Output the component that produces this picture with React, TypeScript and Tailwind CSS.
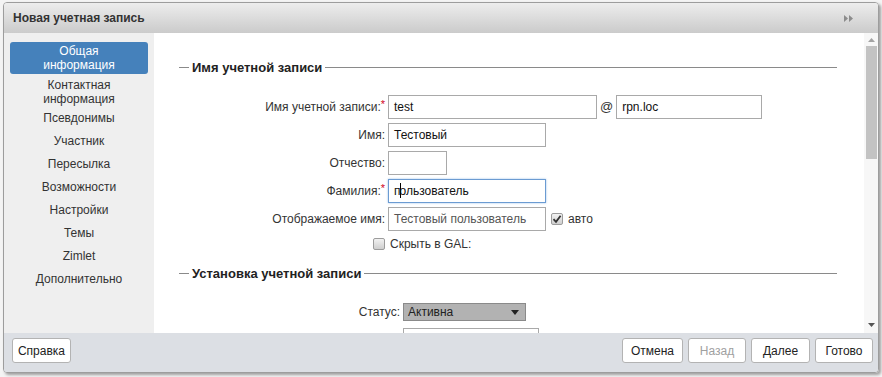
import React from "react";

const font = { fontFamily: '"Liberation Sans", Arial, sans-serif' };

const navItems = [
  "Псевдонимы",
  "Участник",
  "Пересылка",
  "Возможности",
  "Настройки",
  "Темы",
  "Zimlet",
  "Дополнительно",
];

function Legend({ title }: { title: string }) {
  return (
    <div className="flex items-center pl-[25px] pr-[27px]">
      <div className="h-px w-[10px] bg-[#8a8a8a]" />
      <span className="px-[3px] text-[13px] font-bold text-[#222]">{title}</span>
      <div className="h-px flex-1 bg-[#8a8a8a]" />
    </div>
  );
}

function Label({ text, req }: { text: string; req?: boolean }) {
  return (
    <div className="w-[234px] shrink-0 pr-[3px] text-right text-[12px] text-[#333]">
      {text}
      {req && <span className="relative -top-[3px] text-[11px] text-[#d0021b]">*</span>}
    </div>
  );
}

function Field({ w, children, focus, muted }: { w: string; children?: React.ReactNode; focus?: boolean; muted?: boolean }) {
  return (
    <div
      className={`${w} flex h-[24px] items-center border pl-[5px] text-[12px] ${
        focus ? "border-[#6b9bd2] shadow-[0_0_2px_#9cc0e8]" : "border-[#a9a9a9]"
      } ${muted ? "text-[#555]" : "text-[#111]"}`}
    >
      {children}
    </div>
  );
}

function Box({ checked }: { checked?: boolean }) {
  return (
    <div className="flex h-[12px] w-[12px] items-center justify-center rounded-[2px] border border-[#9c9c9c] bg-gradient-to-b from-[#f2f2f2] to-[#cfcfcf]">
      {checked && (
        <svg width="10" height="10" viewBox="0 0 10 10">
          <path d="M1.5 5.2 L4 7.8 L8.6 1.8" fill="none" stroke="#333" strokeWidth="1.8" />
        </svg>
      )}
    </div>
  );
}

function Btn({ text, w, disabled }: { text: string; w: string; disabled?: boolean }) {
  return (
    <div
      className={`${w} flex h-[25px] items-center justify-center rounded-[3px] border border-[#b3b3b3] bg-white text-[12px] ${
        disabled ? "text-[#a0a0a0]" : "text-[#222]"
      }`}
    >
      {text}
    </div>
  );
}

export default function App() {
  return (
    <div style={font} className="h-[377px] w-[882px] overflow-hidden bg-[#f4f4f4] pl-[3px] pt-[2px]">
      <div className="flex h-[371px] w-[876px] flex-col overflow-hidden rounded-[4px] border border-[#9d9d9d] shadow-[2px_2px_3px_rgba(0,0,0,0.35)]">
        {/* Title */}
        <div className="flex h-[30px] shrink-0 items-center justify-between bg-gradient-to-b from-[#ededed] to-[#cbcbcb] pl-[9px] pr-[24px]">
          <span className="text-[12px] font-bold text-[#333]">Новая учетная запись</span>
          <svg width="10" height="7" viewBox="0 0 10 7">
            <path d="M0 0 L4 3.5 L0 7 Z M5 0 L9 3.5 L5 7 Z" fill="#8c8c8c" />
          </svg>
        </div>

        {/* Body */}
        <div className="flex h-[300px] shrink-0">
          <div className="w-[150px] shrink-0 bg-[#efefef] pt-[9px] text-center text-[12px] leading-[14px] text-[#333]">
            <div className="mx-[6px] flex h-[32px] flex-col justify-center rounded-[3px] bg-[#4581bb] text-white">
              <span>Общая</span>
              <span>информация</span>
            </div>
            <div className="mt-[4px] flex flex-col">
              <span>Контактная</span>
              <span>информация</span>
            </div>
            <div className="mt-[5px] flex flex-col gap-[9px]">
              {navItems.map((n) => (
                <span key={n}>{n}</span>
              ))}
            </div>
          </div>

          <div className="flex-1 bg-white pt-[25px]">
            <Legend title="Имя учетной записи" />
            <div className="mt-[17px] flex flex-col gap-[4px]">
              <div className="flex items-center">
                <Label text="Имя учетной записи:" req />
                <Field w="w-[209px]">test</Field>
                <span className="px-[3px] text-[13px] text-[#333]">@</span>
                <Field w="w-[146px]">rpn.loc</Field>
              </div>
              <div className="flex items-center">
                <Label text="Имя:" />
                <Field w="w-[158px]">Тестовый</Field>
              </div>
              <div className="flex items-center">
                <Label text="Отчество:" />
                <Field w="w-[59px]" />
              </div>
              <div className="flex items-center">
                <Label text="Фамилия:" req />
                <Field w="w-[158px]" focus>
                  <span>п</span>
                  <span className="-mx-[1px] inline-block h-[15px] w-px bg-black" />
                  <span>ользователь</span>
                </Field>
              </div>
              <div className="flex items-center">
                <Label text="Отображаемое имя:" />
                <Field w="w-[158px]" muted>Тестовый пользователь</Field>
                <div className="ml-[5px] flex items-center gap-[5px] text-[12px] text-[#333]">
                  <Box checked />
                  <span>авто</span>
                </div>
              </div>
              <div className="flex items-center pl-[219px]">
                <Box />
                <span className="ml-[5px] text-[12px] text-[#333]">Скрыть в GAL:</span>
              </div>
            </div>

            <div className="mt-[11px]">
              <Legend title="Установка учетной записи" />
            </div>
            <div className="mt-[20px] flex items-center">
              <div className="w-[249px] shrink-0 pr-[3px] text-right text-[12px] text-[#333]">Статус:</div>
              <div className="flex h-[18px] w-[123px] items-center justify-between border border-[#8a8a8a] bg-[#b2b2b2] pl-[4px] pr-[6px] text-[12px] text-[#222]">
                <span>Активна</span>
                <svg width="8" height="5" viewBox="0 0 8 5">
                  <path d="M0 0 H8 L4 5 Z" fill="#222" />
                </svg>
              </div>
            </div>
            <div className="ml-[249px] mt-[7px] h-[20px] w-[136px] border border-[#a9a9a9]" />
          </div>

          {/* Scrollbar */}
          <div className="flex w-[14px] shrink-0 flex-col items-center bg-[#f7f7f7] pt-[5px]">
            <svg width="7" height="4" viewBox="0 0 7 4">
              <path d="M0 4 L3.5 0 L7 4 Z" fill="#a3a3a3" />
            </svg>
            <div className="mt-[4px] h-[113px] w-[11px] bg-[#c3c3c3]" />
            <div className="flex-1" />
            <svg className="mb-[6px]" width="7" height="4" viewBox="0 0 7 4">
              <path d="M0 0 H7 L3.5 4 Z" fill="#555" />
            </svg>
          </div>
        </div>

        {/* Footer */}
        <div className="flex flex-1 items-start justify-between bg-[#dcdfe4] pl-[8px] pr-[5px] pt-[5px]">
          <Btn text="Справка" w="w-[59px]" />
          <div className="flex gap-[5px]">
            <Btn text="Отмена" w="w-[61px]" />
            <Btn text="Назад" w="w-[58px]" disabled />
            <Btn text="Далее" w="w-[59px]" />
            <Btn text="Готово" w="w-[58px]" />
          </div>
        </div>
      </div>
    </div>
  );
}
